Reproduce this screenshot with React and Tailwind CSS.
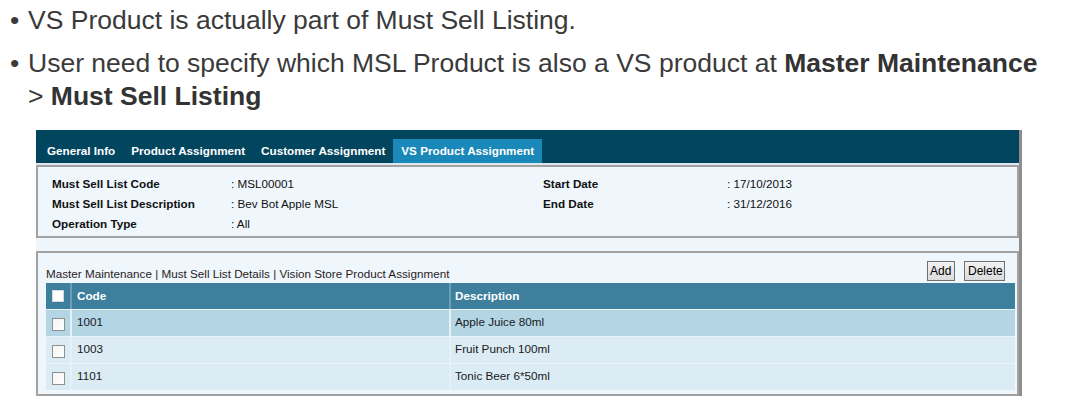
import React from 'react';

const rows = [
  { code: '1001', desc: 'Apple Juice 80ml', active: true },
  { code: '1003', desc: 'Fruit Punch 100ml' },
  { code: '1101', desc: 'Tonic Beer 6*50ml' },
];

function Box({ header }) {
  return (
    <span
      className={
        header
          ? 'block w-[12px] h-[12px] bg-white border border-[#cfd8dc]'
          : 'block w-[13px] h-[13px] bg-gradient-to-br from-[#f4f4f4] to-white border border-[#8e8f8f]'
      }
    />
  );
}

export default function App() {
  return (
    <div className="w-[1081px] h-[414px] bg-white overflow-hidden font-['Liberation_Sans',Arial,sans-serif]">
      {/* bullet notes */}
      <div className="pt-[4px] text-[26.5px] leading-[33px] text-[#3a3a3a]">
        <div className="flex">
          <span className="w-[28px] shrink-0 pl-[10px]">•</span>
          <span>VS Product is actually part of Must Sell Listing.</span>
        </div>
        <div className="flex mt-[10px]">
          <span className="w-[28px] shrink-0 pl-[10px]">•</span>
          <span>
            User need to specify which MSL Product is also a VS product at{' '}
            <b className="text-[#333]">Master Maintenance</b>
            <br />
            &gt; <b className="text-[#333]">Must Sell Listing</b>
          </span>
        </div>
      </div>

      {/* app window */}
      <div className="ml-[36px] mt-[17px] w-[986px] border-r-[3px] border-[#8d8d8d] bg-[#eef6fc] text-[11.7px]">
        <div className="h-[33px] bg-[#02455f] flex items-end pl-[3px]">
          {['General Info', 'Product Assignment', 'Customer Assignment'].map((t) => (
            <div key={t} className="h-[24px] px-[8px] flex items-center font-bold text-white">
              {t}
            </div>
          ))}
          <div className="h-[24px] px-[8px] flex items-center font-bold text-white bg-[#1a88b8]">
            VS Product Assignment
          </div>
        </div>
        <div className="h-[2px] bg-[#dfe8ee]" />

        {/* header info */}
        <div className="h-[73px] border-2 border-[#a2a2a2] bg-[#eff7fd] pt-[7px] pl-[14px] text-[#111]">
          <div className="grid grid-cols-[179px_312px_184px_1fr] auto-rows-[20px] items-center">
            <span className="font-bold">Must Sell List Code</span>
            <span>: MSL00001</span>
            <span className="font-bold">Start Date</span>
            <span>: 17/10/2013</span>
            <span className="font-bold">Must Sell List Description</span>
            <span>: Bev Bot Apple MSL</span>
            <span className="font-bold">End Date</span>
            <span>: 31/12/2016</span>
            <span className="font-bold">Operation Type</span>
            <span>: All</span>
          </div>
        </div>

        <div className="h-[13px]" />

        {/* product assignment list */}
        <div className="h-[145px] border-2 border-[#a2a2a2] bg-[#eff7fd] pl-[8px] pr-[2px] pt-[8px]">
          <div className="flex items-end justify-between h-[21px]">
            <span className="text-[#2a1c1c] leading-[14px] pb-[1px]">
              Master Maintenance | Must Sell List Details | Vision Store Product Assignment
            </span>
            <div className="flex gap-[9px] mr-[10px] mb-[1px]">
              <button className="w-[28px] h-[20px] pl-[2px] text-left border border-[#707070] bg-gradient-to-b from-[#f2f2f2] to-[#dcdcdc] text-[12px] text-black leading-none">
                Add
              </button>
              <button className="w-[41px] h-[20px] pl-[3px] text-left border border-[#707070] bg-gradient-to-b from-[#f2f2f2] to-[#dcdcdc] text-[12px] text-black leading-none">
                Delete
              </button>
            </div>
          </div>
          <div className="mt-[1px]">
            <div className="grid grid-cols-[26px_379px_1fr] h-[26px] bg-[#3d7f9c] text-white font-bold">
              <div className="flex items-center justify-center border-r-2 border-[#6a9fb6]">
                <Box header />
              </div>
              <div className="flex items-center pl-[5px] border-r-2 border-[#6a9fb6]">Code</div>
              <div className="flex items-center pl-[4px]">Description</div>
            </div>
            {rows.map((r) => (
              <div
                key={r.code}
                className={
                  'grid grid-cols-[26px_379px_1fr] h-[27px] border-t-[1px] border-[#e9f4f9] text-[#1a1a1a] ' +
                  (r.active ? 'bg-[#b4d5e4]' : 'bg-[#dbecf4]')
                }
              >
                <div className="flex items-center justify-center border-r-2 border-[#e6f1f7] pt-[2px]">
                  <Box />
                </div>
                <div className="flex items-center pl-[5px] pb-[2px] border-r-2 border-[#e6f1f7]">{r.code}</div>
                <div className="flex items-center pl-[4px] pb-[2px]">{r.desc}</div>
              </div>
            ))}
          </div>
        </div>
      </div>
    </div>
  );
}
